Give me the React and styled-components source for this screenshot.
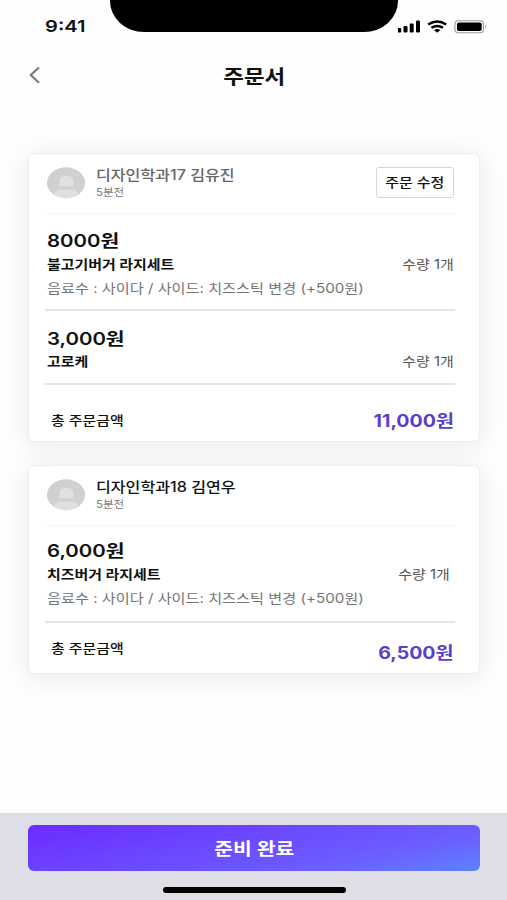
import React from "react";
import styled, { createGlobalStyle } from "styled-components";

const GlobalStyle = createGlobalStyle`
  * { box-sizing: border-box; }
  body { margin: 0; background: #fff; }
`;

const Screen = styled.div`
  width: 507px;
  height: 900px;
  overflow: hidden;
  display: flex;
  flex-direction: column;
  background: #fefefe;
  color: #111;
  font-family: Inter, "Noto Sans CJK KR", sans-serif;
`;

/* Wide lettering: each label is stretched horizontally from one edge. */
const Label = styled.span`
  display: block;
  flex: none;
  white-space: nowrap;
  height: 20px;
  line-height: 20px;
  font-size: ${(p) => p.$size || 13}px;
  font-weight: ${(p) => p.$weight || 400};
  color: ${(p) => p.$color || "#111"};
  transform: scaleX(${(p) => p.$wide || 1.15});
  transform-origin: ${(p) => p.$from || "left"} center;
`;

const StatusBar = styled.header`
  display: grid;
  grid-template-columns: 110px 288px 109px;
  height: 53px;
  flex: none;
`;

const Clock = styled.div`
  padding: 16px 0 0 45px;
`;

const Notch = styled.div`
  height: 32px;
  background: #000;
  border-radius: 0 0 34px 34px / 0 0 31px 31px;
`;

const StatusIcons = styled.svg`
  width: 109px;
  height: 53px;
`;

const TitleBar = styled.div`
  display: grid;
  grid-template-columns: 60px 1fr 60px;
  align-items: center;
  height: 47px;
  flex: none;
`;

const BackButton = styled.button`
  border: 0;
  padding: 0;
  margin: -4px 0 0 27px;
  width: 16px;
  height: 20px;
  background: none;
  svg { display: block; }
`;

const Title = styled.div`
  display: flex;
  justify-content: center;
  padding: 2px 0 0 1px;
`;

const Orders = styled.main`
  flex: 1;
  display: flex;
  flex-direction: column;
  gap: 23px;
  padding: 53px 27.5px 0 28px;
`;

const Card = styled.section`
  height: ${(p) => p.$height}px;
  padding: 0 24px 0 16px;
  background: #fff;
  border: 1px solid #ececec;
  border-radius: 6px;
  box-shadow: 0 3px 28px rgba(0, 0, 0, 0.09);
`;

const CardHeader = styled.div`
  display: flex;
  align-items: flex-start;
  height: ${(p) => p.$height}px;
  padding: 13px 1px 0 0;
  margin-left: 2px;
  border-bottom: 1px solid #f3f3f3;
`;

const Avatar = styled.svg`
  width: 38px;
  height: 32px;
  flex: none;
`;

const Customer = styled.div`
  flex: 1;
  padding-left: 10.5px;
  margin-top: -2px;
  display: flex;
  flex-direction: column;
  > :last-child { margin-top: -3.5px; }
`;

const EditButton = styled.button`
  width: 77.5px;
  height: 31.5px;
  margin-top: -0.5px;
  padding: 0 0 1px;
  display: flex;
  justify-content: center;
  align-items: center;
  background: #fff;
  border: 1.5px solid #d6d6d6;
  border-radius: 3px;
  font-family: inherit;
`;

const Item = styled.div`
  height: ${(p) => p.$height}px;
  padding: ${(p) => p.$top}px 1px 0 2px;
  border-bottom: 2px solid #e4e4e4;
`;

const ItemRow = styled.div`
  display: flex;
  justify-content: space-between;
  margin: ${(p) => p.$gap}px ${(p) => p.$inset || 0}px 4px 0;
`;

const Total = styled.div`
  display: flex;
  justify-content: space-between;
  align-items: flex-start;
  padding: ${(p) => p.$top}px 1px 0 6px;
`;

const Amount = styled.div`
  margin-top: ${(p) => p.$drop}px;
`;

const Footer = styled.footer`
  height: 87px;
  flex: none;
  padding: 12px 27px 0 28px;
  display: flex;
  flex-direction: column;
  align-items: center;
  background: #dfdee6;
`;

const DoneButton = styled.button`
  width: 100%;
  height: 46px;
  padding: 2px 0 0;
  border: 0;
  border-radius: 6px;
  display: flex;
  justify-content: center;
  align-items: center;
  font-family: inherit;
  background: linear-gradient(168deg, #6c2eff 5%, #6b60ff 75%, #5b83ff 100%);
`;

const HomeIndicator = styled.div`
  width: 183px;
  height: 6px;
  margin-top: 15.5px;
  border-radius: 3px;
  background: #000;
`;

function Profile({ clip }) {
  return (
    <Avatar viewBox="0 0 38 32">
      <defs>
        <clipPath id={clip}><ellipse cx="19" cy="15.8" rx="19" ry="15.5" /></clipPath>
      </defs>
      <g clipPath={`url(#${clip})`}>
        <rect width="38" height="32" fill="#d0d0d0" />
        <path d="M12.5 18.5V15a7 6.5 0 0 1 14 0v3.5q0 1-1 1h-12q-1 0-1-1z" fill="#e0e0e0" />
        <path d="M5 32q1-9 8-9.500h12q7 .5 8 9.500z" fill="#e0e0e0" />
      </g>
    </Avatar>
  );
}

function MenuItem({ price, name, option, height, top, gap, inset }) {
  return (
    <Item $height={height} $top={top}>
      <Label $size={17} $weight={600} $wide={1.2}>{price}</Label>
      <ItemRow $gap={gap} $inset={inset}>
        <Label $weight={700}>{name}</Label>
        <Label $color="#555" $from="right">수량 1개</Label>
      </ItemRow>
      {option && <Label $color="#747474" $wide={1.167}>{option}</Label>}
    </Item>
  );
}

function OrderTotal({ amount, top, drop }) {
  return (
    <Total $top={top}>
      <Label $weight={500}>총 주문금액</Label>
      <Amount $drop={drop}>
        <Label $size={17} $weight={700} $color="#5a3fcb" $wide={1.15} $from="right">{amount}</Label>
      </Amount>
    </Total>
  );
}

const OPTION = "음료수 : 사이다 / 사이드: 치즈스틱 변경 (+500원)";

export default function App() {
  return (
    <Screen>
      <GlobalStyle />
      <StatusBar>
        <Clock><Label $size={16.5} $weight={600} $wide={1.22}>9:41</Label></Clock>
        <Notch />
        <StatusIcons viewBox="398 0 109 53">
          <rect x="397.200" y="28" width="4" height="4.500" rx="1.2" />
          <rect x="403.5" y="26" width="4" height="6.5" rx="1.2" />
          <rect x="409.7" y="23.5" width="4" height="9" rx="1.2" />
          <rect x="416" y="20.5" width="4" height="12" rx="1.2" />
          <g fill="none" stroke="#000" strokeWidth="2.5">
            <path d="M428.2 24.5q9-6 18 0" />
            <path d="M431.4 27.8q5.800-3.800 11.600 0" />
          </g>
          <path d="M434 30.1q3.2-2 6.4 0l-3.2 2.6z" />
          <rect x="454.9" y="20.7" width="28.6" height="12" rx="3.5" fill="none" stroke="#999" strokeWidth="1.1" />
          <rect x="457" y="22.5" width="24.7" height="8.5" rx="1.8" />
          <path d="M485.3 24.5q2 2 0 4.5z" fill="#999" />
        </StatusIcons>
      </StatusBar>
      <TitleBar>
        <BackButton aria-label="뒤로">
          <svg width="16" height="20" viewBox="0 0 16 20" fill="none" stroke="#7b7b7b" strokeWidth="2.2">
            <path d="M12 2.5L3.8 10l8.2 7.7" />
          </svg>
        </BackButton>
        <Title><Label $size={19} $weight={700} $from="center" $wide={1.18}>주문서</Label></Title>
      </TitleBar>
      <Orders>
        <Card $height={289}>
          <CardHeader $height={60}>
            <Profile clip="face-1" />
            <Customer>
              <Label $size={14} $weight={500} $color="#666">디자인학과17 김유진</Label>
              <Label $size={10} $color="#777">5분전</Label>
            </Customer>
            <EditButton><Label $weight={500} $from="center">주문 수정</Label></EditButton>
          </CardHeader>
          <MenuItem price="8000원" name="불고기버거 라지세트" option={OPTION} height={97} top={17} gap={3} />
          <MenuItem price="3,000원" name="고로케" height={74} top={18} gap={2} />
          <OrderTotal amount="11,000원" top={25} drop={1} />
        </Card>
        <Card $height={209}>
          <CardHeader $height={60}>
            <Profile clip="face-2" />
            <Customer>
              <Label $size={14} $weight={500}>디자인학과18 김연우</Label>
              <Label $size={10} $color="#777">5분전</Label>
            </Customer>
          </CardHeader>
          <MenuItem price="6,000원" name="치즈버거 라지세트" option={OPTION} height={97} top={15} gap={3} inset={4} />
          <OrderTotal amount="6,500원" top={15} drop={4.5} />
        </Card>
      </Orders>
      <Footer>
        <DoneButton><Label $size={17} $weight={700} $color="#fff" $wide={1.2} $from="center">준비 완료</Label></DoneButton>
        <HomeIndicator />
      </Footer>
    </Screen>
  );
}
